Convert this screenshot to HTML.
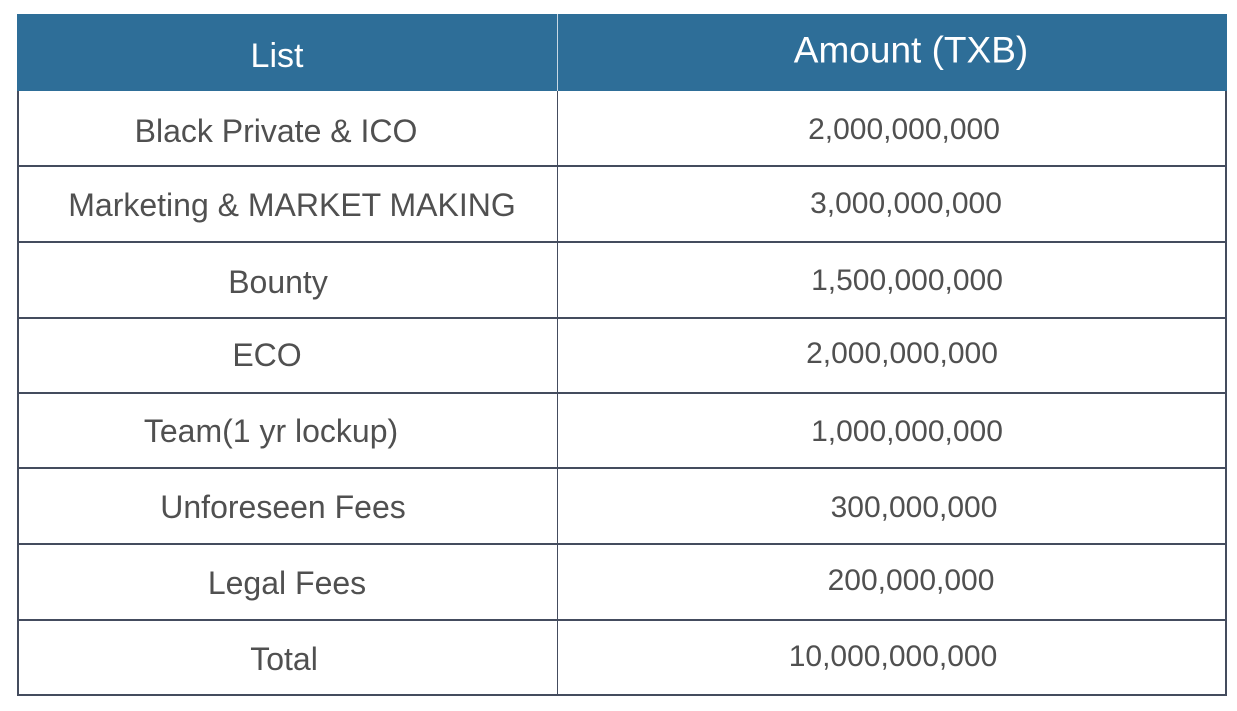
<!DOCTYPE html>
<html><head><style>
body{margin:0;width:1237px;height:711px;background:#fff;position:relative;overflow:hidden;font-family:"Liberation Sans",sans-serif}
.hd{position:absolute;left:17px;top:14px;width:1210px;height:77px;background:#2e6e98}
.l{position:absolute;background:#444c5e}
.t{position:absolute;white-space:nowrap;transform:translate(-50%,-50%);font-size:32px;color:#505050;line-height:1}
.n{font-size:30px}
.w{color:#fff;font-size:34px}
</style></head><body>
<div class="hd"></div>
<div class="l" style="left:557px;top:14px;width:1px;height:77px;background:#c8d8e4"></div>
<div class="l" style="left:17px;top:91px;width:2px;height:605px"></div>
<div class="l" style="left:1225px;top:91px;width:2px;height:605px"></div>
<div class="l" style="left:557px;top:91px;width:1px;height:605px"></div>
<div class="l" style="left:17px;top:165px;width:1210px;height:2px"></div>
<div class="l" style="left:17px;top:241px;width:1210px;height:2px"></div>
<div class="l" style="left:17px;top:317px;width:1210px;height:2px"></div>
<div class="l" style="left:17px;top:392px;width:1210px;height:2px"></div>
<div class="l" style="left:17px;top:467px;width:1210px;height:2px"></div>
<div class="l" style="left:17px;top:543px;width:1210px;height:2px"></div>
<div class="l" style="left:17px;top:619px;width:1210px;height:2px"></div>
<div class="l" style="left:17px;top:694px;width:1210px;height:2px"></div>
<div class="t w" style="left:277px;top:56px">List</div>
<div class="t w" style="left:911px;top:50px;font-size:37px">Amount (TXB)</div>
<div class="t" style="left:276px;top:131px">Black Private &amp; ICO</div>
<div class="t" style="left:292px;top:205px">Marketing &amp; MARKET MAKING</div>
<div class="t" style="left:278px;top:282px">Bounty</div>
<div class="t" style="left:267px;top:355px">ECO</div>
<div class="t" style="left:271px;top:431px">Team(1 yr lockup)</div>
<div class="t" style="left:283px;top:507px">Unforeseen Fees</div>
<div class="t" style="left:287px;top:583px">Legal Fees</div>
<div class="t" style="left:284px;top:659px">Total</div>
<div class="t n" style="left:904px;top:130px">2,000,000,000</div>
<div class="t n" style="left:906px;top:204px">3,000,000,000</div>
<div class="t n" style="left:907px;top:281px">1,500,000,000</div>
<div class="t n" style="left:902px;top:354px">2,000,000,000</div>
<div class="t n" style="left:907px;top:432px">1,000,000,000</div>
<div class="t n" style="left:914px;top:508px">300,000,000</div>
<div class="t n" style="left:911px;top:581px">200,000,000</div>
<div class="t n" style="left:893px;top:657px">10,000,000,000</div>
</body></html>
